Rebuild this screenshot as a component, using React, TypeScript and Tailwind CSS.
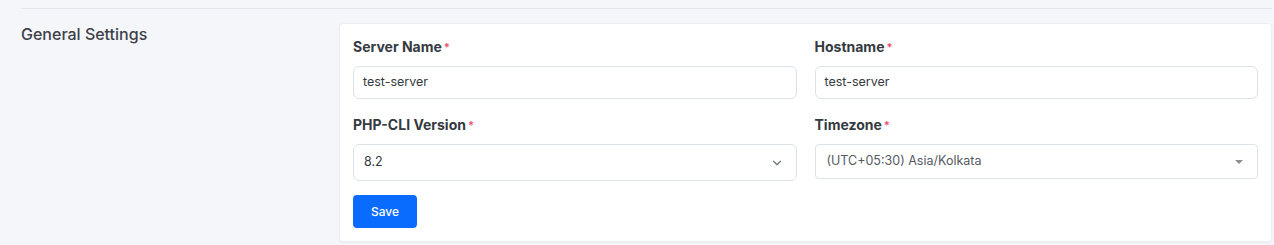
import { ChevronDown } from "lucide-react";

const font = { fontFamily: "Inter, 'Noto Sans', sans-serif" };

function Label({ text }: { text: string }) {
  return (
    <label className="mb-[9px] block text-[14px] font-bold leading-[20px] text-[#343a40]">
      {text}
      <span className="ml-[2px] align-top text-[11px] text-[#f0506e]">*</span>
    </label>
  );
}

function TextField({ label, value }: { label: string; value: string }) {
  return (
    <div>
      <Label text={label} />
      <div className="flex h-[33px] items-center rounded-[6px] border border-[#dde2ea] bg-white px-[9px] text-[12.5px] text-[#343a40]">
        {value}
      </div>
    </div>
  );
}

export default function App() {
  return (
    <div style={font} className="h-[245px] bg-[#f5f6fa] pl-[21px] pr-[2px] pt-[8px]">
      <div className="h-px bg-[#e3e6ec]" />
      <div className="mt-[14px] flex">
        <div className="w-[318px] pt-px text-[16px] font-medium leading-[20px] text-[#3d4148]">
          General Settings
        </div>
        <div className="flex-1 rounded-[4px] border border-[#eceef2] bg-white px-[13px] pb-[13px] pt-[13px] shadow-[0_1px_2px_rgba(0,0,0,0.04)]">
          <div className="grid grid-cols-2 gap-x-[18px] gap-y-[16px]">
            <TextField label="Server Name" value="test-server" />
            <TextField label="Hostname" value="test-server" />
            <div>
              <Label text="PHP-CLI Version" />
              <div className="flex h-[37px] items-center justify-between rounded-[6px] border border-[#dde2ea] bg-white pl-[10px] pr-[12px] text-[12.5px] text-[#343a40]">
                <span>8.2</span>
                <ChevronDown size={14} strokeWidth={2} className="text-[#6c757d]" />
              </div>
            </div>
            <div>
              <Label text="Timezone" />
              <div className="flex h-[35px] items-center justify-between rounded-[4px] border border-[#dde2ea] bg-white pl-[11px] pr-[14px] text-[12.5px] text-[#555a62]">
                <span>(UTC+05:30) Asia/Kolkata</span>
                <span className="h-0 w-0 border-x-[4px] border-t-[4px] border-x-transparent border-t-[#8a8f96]" />
              </div>
            </div>
          </div>
          <button className="mt-[14px] h-[33px] w-[64px] rounded-[4px] bg-[#0a6cff] text-[12px] font-medium text-white">
            Save
          </button>
        </div>
      </div>
    </div>
  );
}
